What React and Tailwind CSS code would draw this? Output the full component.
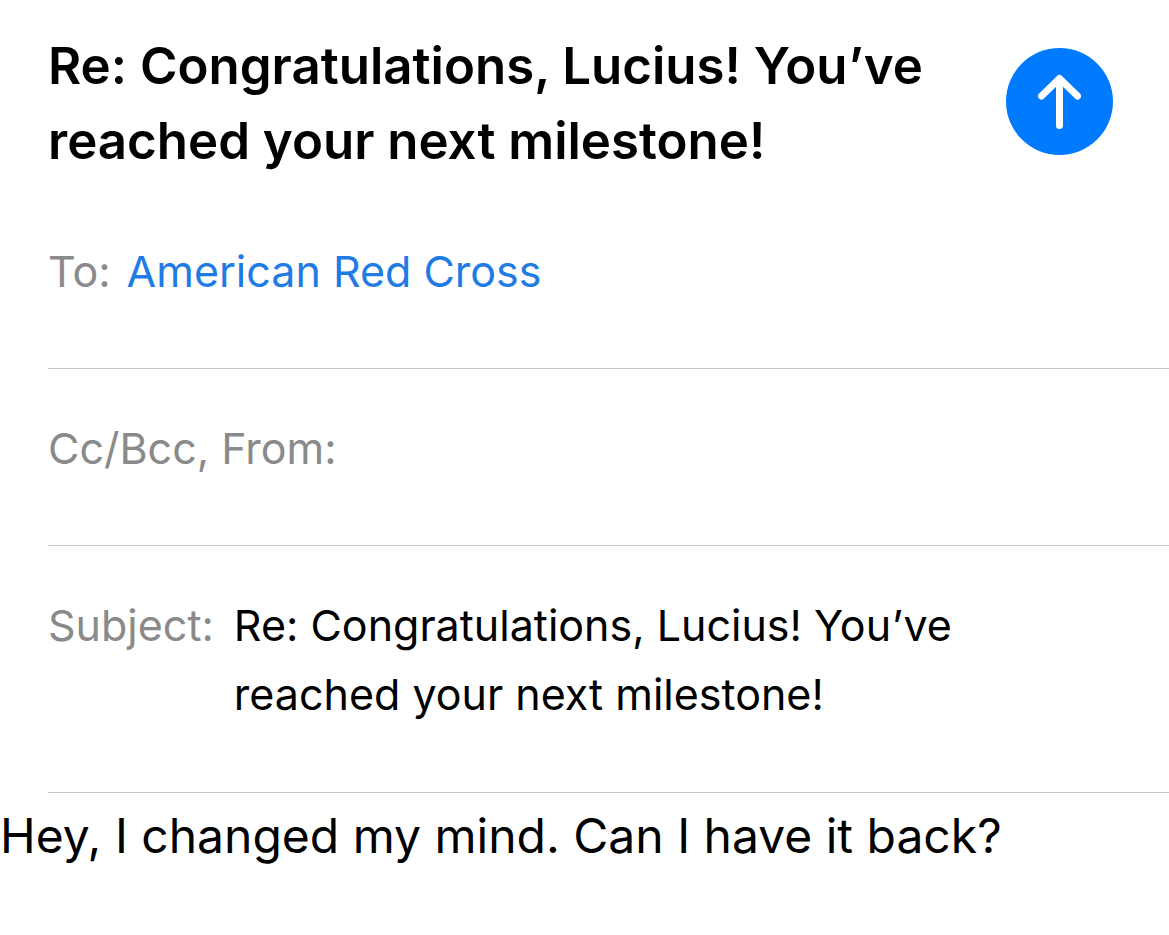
import { useState } from 'react'

const SUBJECT = 'Re: Congratulations, Lucius! You’ve reached your next milestone!'

function FieldRow({ children }) {
  return (
    <div className="ml-12 flex border-b border-[#c6c6c8] text-[43px] leading-[69px]">
      {children}
    </div>
  )
}

export default function App() {
  const [cc, setCc] = useState('')

  return (
    <main className="min-h-screen bg-white font-['Inter',sans-serif] text-black">
      <header className="flex items-start justify-between pl-12 pr-14 pt-7">
        <h1 className="max-w-[900px] text-[51px] font-semibold leading-[75px]">{SUBJECT}</h1>
        <button
          type="button"
          aria-label="Send"
          className="mt-5 flex size-[107px] shrink-0 items-center justify-center rounded-full bg-[#007aff]"
        >
          <svg viewBox="0 0 107 107" className="size-full" fill="none" stroke="white" strokeWidth="7" strokeLinecap="round" strokeLinejoin="round">
            <path d="M53.5 77.5V31M35.5 48L53.5 30.5L71.5 48" />
          </svg>
        </button>
      </header>

      <FieldRow>
        <div className="flex gap-4 pb-[62px] pt-[59px]">
          <span className="text-[#8a8a8b]">To:</span>
          <a href="#recipient" className="text-[#1f7ce4]">American Red Cross</a>
        </div>
      </FieldRow>

      <FieldRow>
        <label htmlFor="cc" className="shrink-0 pb-[62px] pt-[45px] text-[#8a8a8b]">Cc/Bcc, From:</label>
        <input
          id="cc"
          value={cc}
          onChange={(e) => setCc(e.target.value)}
          className="min-w-0 flex-1 px-4 outline-none"
        />
      </FieldRow>

      <FieldRow>
        <label htmlFor="subject" className="shrink-0 pt-[45px] text-[#8a8a8b]">Subject:</label>
        <textarea
          id="subject"
          rows={2}
          defaultValue={SUBJECT}
          className="mb-[63px] ml-5 mr-[150px] mt-[45px] min-w-0 flex-1 resize-none overflow-hidden outline-none"
        />
      </FieldRow>

      <textarea
        aria-label="Message"
        rows={1}
        defaultValue="Hey, I changed my mind. Can I have it back?"
        className="block w-full resize-none overflow-hidden pt-2 text-[48px] leading-[70px] outline-none"
      />
    </main>
  )
}
